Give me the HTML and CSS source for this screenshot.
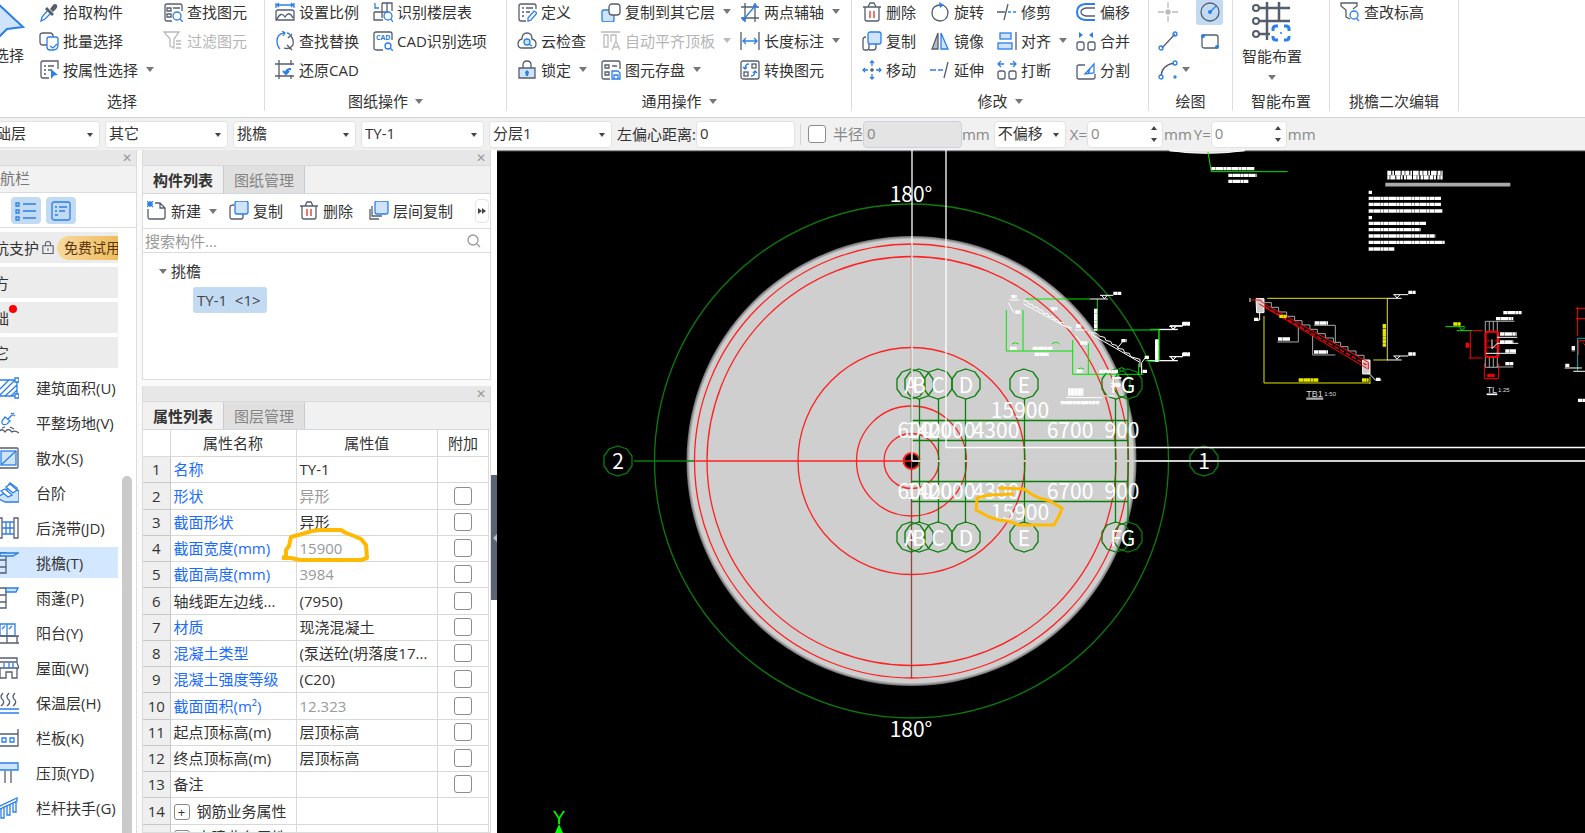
FILE: index.html
```html
<!DOCTYPE html>
<html lang="zh-CN">
<head>
    <meta charset="UTF-8">
    <meta name="viewport" content="width=device-width, initial-scale=1.0">
    <title>挑檐 TY-1</title>
    <link rel="stylesheet" href="styles.css">
</head>
<body>

    <!-- 功能区 -->
    <header class="ribbon">
        <section class="group group-select">
            <div class="tools">
                <button class="big-tool pick">
                    <svg class="arrow" viewBox="0 0 44 44"><path class="b lf" stroke-width="2" d="M14 2 L42 28 L26 30 L14 42 Z"/></svg>
                    选择
                </button>
                <button class="tool"><svg viewBox="0 0 20 20"><path class="b" d="M9 8 L3 15 L2 19 L6 17 L12 11"/><path class="df" d="M8 5 L15 12 L13 14 L6 7 Z M11 7 L14 3 Q16 1 18 3 Q19 5 17 7 L14 10 Z"/></svg>拾取构件</button>
                <button class="tool"><svg viewBox="0 0 20 20"><path d="M8 14 H4 Q1 14 1 11 V4 Q1 2 4 2 H11 Q14 2 14 5 V6"/><path class="b" d="M8 8 Q8 6 10 6 H17 Q19 6 19 8 V14 Q19 19 14 19 H11 Q8 19 8 16 Z M11 15 L14 17 L18 13"/></svg>批量选择</button>
                <button class="tool"><svg viewBox="0 0 20 20"><path d="M10 18 H4 Q2 18 2 16 V3 Q2 1 4 1 H19 V9 M5 6 H7 M9 6 H15 M5 10 H7 M9 10 H13 M5 14 H7"/><path class="bf" d="M12 9 L19 15 L15 15.500 L12 19 Z"/></svg>按属性选择<i class="caret"></i></button>
                <button class="tool"><svg viewBox="0 0 20 20"><path d="M9 19 H4 Q2 19 2 17 V4 Q2 2 4 2 H17 Q19 2 19 4 V9 M4 6 H8 V9 H4 Z M10 6 H17 M4 12 H8 V15 H4 Z"/><circle class="b" cx="14" cy="14" r="4"/><path class="b" d="M17 17 L20 20"/></svg>查找图元</button>
                <button class="tool" disabled><svg viewBox="0 0 20 20"><path d="M1 1 H16 L11 8 V17 L7 15 V8 Z M13 10 H18 M13 13 H18 M13 17 H18"/></svg>过滤图元</button>
            </div>
            <h3>选择</h3>
        </section>

        <section class="group group-drawing">
            <div class="tools">
                <button class="tool"><svg viewBox="0 0 20 20"><path class="b" d="M1 1 V6 M19 1 V6 M2 3 H18 M4 1 L2 3 L4 5 M16 1 L18 3 L16 5"/><path d="M3 8 H17 Q19 8 19 10 V18 H1 V10 Q1 8 3 8 M2 17 Q6 9 10 15 Q14 8 18 16"/></svg>设置比例</button>
                <button class="tool"><svg viewBox="0 0 20 20"><path class="b" d="M9 2 Q2 3 2 10 Q2 15 5 18 M7 0 L10 2 L8 5 M12 2 Q14 2 15 4"/><path d="M16 5 Q19 9 18 14 L14 18 M12 14 L17 19 M13 7 L17 3 M9 17 Q12 18 14 17"/></svg>查找替换</button>
                <button class="tool"><svg viewBox="0 0 20 20"><path d="M4 0 V19 M16 0 V5 M0 4 H19 M0 16 H19 M16 15 V19"/><path class="b" stroke-width="2" d="M11 13 Q11 9 16 9 M8 11 L11 14 L14 11"/></svg>还原CAD</button>
                <button class="tool"><svg viewBox="0 0 20 20"><path class="b" d="M2 1 V6 H6"/><path d="M9 1 H19 V9 M9 1 V16 M1 10 H15 M1 10 V18 H10 M14 1 V9"/><circle class="b" cx="15" cy="14" r="4"/><path class="b" d="M18 17 L20 20"/></svg>识别楼层表</button>
                <button class="tool"><svg viewBox="0 0 20 20"><path d="M10 19 H4 Q1 19 1 17 V3 Q1 1 3 1 H17 Q19 1 19 3 V9"/><text class="cad" x="3" y="9">CAD</text><circle class="b" cx="15" cy="15" r="3"/><path class="b" d="M17 17 L20 20"/></svg>CAD识别选项</button>
            </div>
            <h3>图纸操作<i class="caret"></i></h3>
        </section>

        <section class="group group-common">
            <div class="tools">
                <button class="tool"><svg viewBox="0 0 20 20"><path d="M9 19 H4 Q2 19 2 17 V4 Q2 2 4 2 H17 Q19 2 19 4 V7 M5 6 H7 M9 6 H16 M5 10 H7 M9 10 H13 M5 14 H7"/><path class="b" d="M11 19 V16 L17 9 L20 11 L14 18 Z"/></svg>定义</button>
                <button class="tool"><svg viewBox="0 0 20 20"><path d="M5 17 Q1 17 1 13 Q1 9 5 8 Q5 2 10 2 Q15 2 15 8 Q19 9 19 13 Q19 17 15 17 Z"/><circle class="b lf" cx="10" cy="11" r="3"/><path class="b" d="M12 13 L15 15"/></svg>云检查</button>
                <button class="tool"><svg viewBox="0 0 20 20"><path d="M6 8 V5 Q6 1 10 1 Q14 1 14 5 V8"/><path class="lf" d="M2 8 H18 V18 H2 Z"/><path class="bf" d="M10 10 L12 12 L11 16 H9 L8 12 Z"/></svg>锁定<i class="caret"></i></button>
                <button class="tool"><svg viewBox="0 0 20 20"><rect class="b lf" x="1" y="8" width="12" height="12" rx="2"/><rect class="wf" x="8" y="2" width="11" height="11" rx="3"/></svg>复制到其它层<i class="caret"></i></button>
                <button class="tool" disabled><svg viewBox="0 0 20 20"><path d="M0 1 H19 M3 4 H7 V16 H3 Z M10 11 V4 H15 V10 M11 19 L15 10 L19 19 M12 16 H17"/></svg>自动平齐顶板<i class="caret"></i></button>
                <button class="tool"><svg viewBox="0 0 20 20"><path d="M9 19 H3 Q1 19 1 17 V3 Q1 1 3 1 H17 Q19 1 19 3 V9 M4 5 H8 V8 H4 Z M11 6 H16 M4 12 H8 V15 H4 Z"/><path class="b" d="M11 11 H17 L19 13 V19 H11 Z M13 19 V15 H17 V19"/></svg>图元存盘<i class="caret"></i></button>
                <button class="tool"><svg viewBox="0 0 20 20"><path d="M5 1 V20 M15 1 V20 M1 5 H19 M1 16 H19"/><path class="b" d="M4 17 L15 4"/><circle class="bf" cx="4" cy="17" r="2"/><circle class="bf" cx="15" cy="4" r="2"/></svg>两点辅轴<i class="caret"></i></button>
                <button class="tool"><svg viewBox="0 0 20 20"><path d="M1 1 V19 M19 1 V19"/><path class="b" d="M3 10 H17 M6 7 L3 10 L6 13 M14 7 L17 10 L14 13"/></svg>长度标注<i class="caret"></i></button>
                <button class="tool"><svg viewBox="0 0 20 20"><rect x="1" y="1" width="18" height="18" rx="2"/><rect x="12" y="4" width="4" height="4"/><rect x="4" y="12" width="4" height="4"/><path class="b" d="M9 4 Q5 4 5 9 M3 7 L5 9 L7 7 M11 16 Q15 16 15 11 M13 13 L15 11 L17 13"/></svg>转换图元</button>
            </div>
            <h3>通用操作<i class="caret"></i></h3>
        </section>

        <section class="group group-modify">
            <div class="tools">
                <button class="tool"><svg viewBox="0 0 20 20"><path d="M1 5 H19 M6 5 L8 1 H12 L14 5 M3 5 V17 Q3 19 5 19 H15 Q17 19 17 17 V5"/><path class="r" d="M8 9 V16 M12 9 V16"/></svg>删除</button>
                <button class="tool"><svg viewBox="0 0 20 20"><path d="M7 13 V17 Q7 19 5 19 H3 Q1 19 1 17 V9 Q1 6 4 6"/><path d="M7 19 H11 Q14 19 14 16 V13"/><rect class="b lf" x="6" y="1" width="13" height="12" rx="2"/></svg>复制</button>
                <button class="tool"><svg viewBox="0 0 20 20"><path class="b" d="M10 1 V6 M10 14 V19 M1 10 H6 M14 10 H19 M8 3 L10 1 L12 3 M8 17 L10 19 L12 17 M3 8 L1 10 L3 12 M17 8 L19 10 L17 12"/><path d="M8 10 H12 M10 8 V12"/></svg>移动</button>
                <button class="tool"><svg viewBox="0 0 20 20"><path d="M13 3 Q18 6 18 11 Q17 19 10 19 Q2 18 2 11 Q2 3 11 3"/><path class="bf" d="M9 0 L14 3 L10 6 Z"/></svg>旋转</button>
                <button class="tool"><svg viewBox="0 0 20 20"><path class="gf" d="M8 2 V18 H2 Z"/><path class="b lf" d="M11 2 L18 18 H11 Z"/></svg>镜像</button>
                <button class="tool"><svg viewBox="0 0 20 20"><path class="b" d="M0 10 H6 M8 10 H13"/><path d="M18 2 L14 18"/></svg>延伸</button>
                <button class="tool"><svg viewBox="0 0 20 20"><path d="M0 10 H8 M11 2 L7 18"/><path class="b" d="M11 10 H14 M16 10 H19"/></svg>修剪</button>
                <button class="tool"><svg viewBox="0 0 20 20"><rect class="b lf" x="3" y="2" width="11" height="6"/><rect class="b lf" x="1" y="12" width="14" height="6"/><path d="M19 1 V19"/></svg>对齐<i class="caret"></i></button>
                <button class="tool"><svg viewBox="0 0 20 20"><path class="b" d="M2 4 H7 M13 4 H18 M4 1 L1 4 L4 7 M16 1 L19 4 L16 7"/><rect x="1" y="11" width="7" height="8" rx="2"/><rect x="12" y="11" width="7" height="8" rx="2"/></svg>打断</button>
                <button class="tool"><svg viewBox="0 0 20 20"><path class="b" stroke-width="2" d="M19 2 H9 Q1 3 1 10 Q1 17 9 18 H19"/><path d="M19 6 H10 Q5 7 5 10 Q5 13 10 14 H19"/></svg>偏移</button>
                <button class="tool"><svg viewBox="0 0 20 20"><path class="bf" d="M3 1 L7 4 L3 7 Z M17 1 L13 4 L17 7 Z"/><rect x="1" y="11" width="7" height="8" rx="2"/><rect x="12" y="11" width="7" height="8" rx="2"/></svg>合并</button>
                <button class="tool"><svg viewBox="0 0 20 20"><path d="M9 5 H3 Q1 5 1 7 V17 Q1 19 3 19 H17 Q19 19 19 17 V14"/><path class="b" d="M9 14 L18 4 V13 Z M12 14 L14 9"/></svg>分割</button>
            </div>
            <h3>修改<i class="caret"></i></h3>
        </section>

        <section class="group group-draw">
            <div class="tools">
                <button class="tool" aria-label="点" disabled><svg viewBox="0 0 20 20"><path d="M10 0 V6 M10 14 V20 M0 10 H6 M14 10 H20"/><circle cx="10" cy="10" r="2" fill="#bbb"/></svg></button>
                <button class="tool" aria-label="直线"><svg viewBox="0 0 20 20"><path d="M4 17 L17 3"/><circle class="b" cx="3" cy="17" r="2"/><circle class="b" cx="17" cy="3" r="2"/></svg></button>
                <button class="tool" aria-label="弧线"><svg viewBox="0 0 20 20"><path d="M3 16 Q4 5 16 3"/><circle class="b" cx="3" cy="17" r="2"/><circle class="b" cx="17" cy="3" r="2"/><circle class="b" cx="17" cy="17" r="1"/></svg><i class="caret"></i></button>
                <button class="tool active" aria-label="圆"><svg viewBox="0 0 20 20"><circle cx="10" cy="10" r="9"/><path class="b" d="M10 10 L16 4"/><circle class="bf" cx="10" cy="10" r="2"/></svg></button>
                <button class="tool" aria-label="矩形"><svg viewBox="0 0 20 20"><rect x="2" y="4" width="16" height="13" rx="2"/><circle class="bf" cx="3" cy="5" r="2"/><circle class="bf" cx="17" cy="16" r="2"/></svg></button>
            </div>
            <h3>绘图</h3>
        </section>

        <section class="group group-smart">
            <div class="tools">
                <button class="big-tool">
                    <svg class="grid-icon" viewBox="0 0 40 40"><path stroke-width="2.500" d="M6 7 H38 M6 20 H38 M6 33 H18 M15 1 V39 M27 1 V20"/><circle class="wf" stroke-width="2" cx="4" cy="7" r="3"/><circle class="wf" stroke-width="2" cx="4" cy="20" r="3"/><circle class="wf" stroke-width="2" cx="4" cy="33" r="3"/><path class="b" stroke-width="3" d="M21 30 V28 Q21 25 24 25 H26 M32 25 H34 Q37 25 37 28 V30 M37 35 V36 Q37 39 34 39 H32 M26 39 H24 Q21 39 21 36 V35"/><circle class="bf" cx="29" cy="32" r="1"/></svg>
                    智能布置
                    <i class="caret"></i>
                </button>
            </div>
            <h3>智能布置</h3>
        </section>

        <section class="group group-edit">
            <div class="tools">
                <button class="tool"><svg viewBox="0 0 20 20"><path d="M10 17 L6 15 V8 L1 4 V1 H17 V4 L13 7"/><circle class="b" cx="14" cy="13" r="4"/><path class="b" d="M16 16 L19 19"/></svg>查改标高</button>
            </div>
            <h3>挑檐二次编辑</h3>
        </section>
    </header>

    <!-- 参数栏 -->
    <form class="options">
        <span class="select"><select aria-label="楼层"><option>基础层</option></select></span>
        <span class="select"><select aria-label="构件类别"><option>其它</option></select></span>
        <span class="select"><select aria-label="构件类型"><option>挑檐</option></select></span>
        <span class="select"><select aria-label="构件"><option>TY-1</option></select></span>
        <span class="select"><select aria-label="分层"><option>分层1</option></select></span>
        <span class="field"><label for="leftOffset">左偏心距离:</label><input type="text" id="leftOffset" value="0"></span>
        <span class="rule"></span>
        <input type="checkbox" id="useRadius">
        <span class="field muted"><label for="useRadius">半径</label><input type="text" id="radius" aria-label="半径" value="0" disabled>mm</span>
        <span class="select short"><select aria-label="偏移方式"><option>不偏移</option></select></span>
        <span class="field muted spin"><label for="offsetX">X=</label><input type="text" id="offsetX" value="0"><i class="arrows"></i>mm</span>
        <span class="field muted spin"><label for="offsetY">Y=</label><input type="text" id="offsetY" value="0"><i class="arrows"></i>mm</span>
    </form>

    <main class="workspace">
        <!-- 导航栏 -->
        <nav class="nav">
            <div class="strip"><button aria-label="关闭导航栏">✕</button></div>
            <h2>导航栏</h2>
            <div class="views">
                <button aria-label="列表"><svg viewBox="0 0 22 20"><path class="b" d="M8 3 H21 M8 10 H21 M8 17 H21 M1 2 H4 V5 H1 Z M1 9 H4 V12 H1 Z M1 16 H4 V19 H1 Z"/></svg></button>
                <button aria-label="卡片"><svg viewBox="0 0 22 20"><rect class="b" x="2" y="1" width="18" height="18" rx="2"/><path class="b" d="M5 6 H7 M9 6 H17 M5 10 H7 M9 10 H15 M5 14 H8"/></svg></button>
            </div>
            <div class="nav-body">
                <ul>
                    <li class="cat"><a href="#">基坑支护</a><svg viewBox="0 0 14 16"><path d="M4 6 V4 Q4 1 7 1 Q10 1 10 4 V6 M1 6 H13 V15 H1 Z M7 9 V12"/></svg><span class="trial">免费试用</span></li>
                    <li class="cat"><a href="#">土方</a></li>
                    <li class="cat"><a href="#">基础</a><i class="dot"></i></li>
                    <li class="cat"><a href="#">其它</a></li>
                    <li><a href="#"><svg viewBox="0 0 22 22"><path class="b" d="M2 3 H20 V19 H2 Z M3 12 L12 3 M3 18 L18 3 M8 19 L20 8 M14 19 L20 13"/><path class="b wf" d="M18 1 H22 V5 H18 Z M18 17 H22 V21 H18 Z"/></svg>建筑面积(U)</a></li>
                    <li><a href="#"><svg viewBox="0 0 22 22"><path class="b" d="M5 9 Q4 14 10 12 L13 9 L8 5 Z M11 7 L17 1 M14 1 L18 4"/><path d="M1 21 Q5 15 8 20 Q11 15 15 20 Q18 18 22 21 M5 16 L8 15 M13 15 L17 17"/></svg>平整场地(V)</a></li>
                    <li><a href="#"><svg viewBox="0 0 22 22"><rect x="1" y="1" width="20" height="20" rx="1"/><rect class="b lf" x="4" y="4" width="15" height="14"/><path class="b" d="M4 18 L19 4"/></svg>散水(S)</a></li>
                    <li><a href="#"><svg viewBox="0 0 22 22"><path class="b lf" d="M2 14 L6 12 V9 L10 8 V5 L13 1 L20 6 V8 L22 9 V20 H8 L2 17 Z"/><path class="b wf" d="M4 9 L11 15 L15 13 L8 7 Z M9 5 L16 11 L20 8 L13 2 Z"/></svg>台阶</a></li>
                    <li><a href="#"><svg viewBox="0 0 22 22"><path d="M1 1 H5 V21 H1 Z M17 1 H21 V21 H17 Z"/><path class="b" d="M5 5 H17 M5 11 H17 M5 17 H17 M9 5 V17 M13 5 V17"/></svg>后浇带(JD)</a></li>
                    <li class="on"><a href="#"><svg viewBox="0 0 22 22"><path d="M3 1 H9 V21 H3 M3 8 H9 M3 15 H9"/><path class="b lf" d="M3 1 H21 L16 4 H3 Z"/></svg>挑檐(T)</a></li>
                    <li><a href="#"><svg viewBox="0 0 22 22"><path d="M3 1 H9 V21 H3 M3 8 H9 M3 15 H9"/><path class="b lf" d="M9 1 H21 L19 5 H9 Z"/></svg>雨蓬(P)</a></li>
                    <li><a href="#"><svg viewBox="0 0 22 22"><path class="b" d="M3 2 H18 V14 H3 Z M10 2 V14 M12 7 L15 4 M5 7 L8 4"/><path d="M1 14 H22 M1 21 H22 M10 14 V21 M20 14 V21"/></svg>阳台(Y)</a></li>
                    <li><a href="#"><svg viewBox="0 0 22 22"><path d="M2 1 H20 V5 H2 Z M1 11 H22 L20 6 M3 11 V21 H9 V15 H15 V21 H20 V11"/><path class="b" d="M7 6 V11 M12 6 V11 M16 6 V11"/></svg>屋面(W)</a></li>
                    <li><a href="#"><svg viewBox="0 0 22 22"><path d="M6 1 Q2 5 6 8 Q8 11 4 14 M12 1 Q8 5 12 8 Q14 11 10 14 M18 1 Q14 5 18 8 Q20 11 16 14"/><path class="b" d="M1 17 H22 M1 21 H22"/></svg>保温层(H)</a></li>
                    <li><a href="#"><svg viewBox="0 0 22 22"><path d="M1 7 H21 V2 M21 7 V19 H1"/><path class="b" d="M5 11 H9 V15 H5 Z M13 11 H17 V15 H13 Z"/></svg>栏板(K)</a></li>
                    <li><a href="#"><svg viewBox="0 0 22 22"><path class="b lf" d="M1 1 H21 V8 H1 Z"/><path d="M8 9 V21 M14 9 V21"/></svg>压顶(YD)</a></li>
                    <li><a href="#"><svg viewBox="0 0 22 22"><path class="b" d="M1 10 L20 1 V4 L1 13 Z M4 11 V21 H7 V10 M10 9 V18 H13 V8 M16 6 V15 H19 V4"/></svg>栏杆扶手(G)</a></li>
                    <li><a href="#" aria-label="更多"><svg viewBox="0 0 22 22"><path d="M5 2 V8 M11 1 V8 M17 2 V8"/></svg></a></li>
                </ul>
                <div class="scroll"><i></i></div>
            </div>
        </nav>

        <div class="docks">
            <!-- 构件列表 -->
            <section class="dock parts">
                <div class="strip"><button aria-label="关闭构件列表">✕</button></div>
                <div class="tabs"><button class="current">构件列表</button><button>图纸管理</button></div>
                <div class="dock-tools">
                    <button class="tool"><svg viewBox="0 0 20 20"><path d="M8 2 H13 L18 7 V16 Q18 18 16 18 H3 Q1 18 1 16 V8 M13 2 V7 H18"/><path class="b" d="M0 0 L6 6 M6 0 L0 6 M3 0 V6 M0 3 H6"/></svg>新建<i class="caret"></i></button>
                    <button class="tool"><svg viewBox="0 0 20 20"><path d="M14 13 V16 Q14 18 12 18 H3 Q1 18 1 16 V6 Q1 4 5 4"/><rect class="b lf" x="6" y="0" width="13" height="13" rx="2"/></svg>复制</button>
                    <button class="tool"><svg viewBox="0 0 20 20"><path d="M1 5 H19 M6 5 L8 1 H12 L14 5 M3 5 V16 Q3 18 5 18 H15 Q17 18 17 16 V5"/><path class="r" d="M8 8 V15 M12 8 V15"/></svg>删除</button>
                    <button class="tool"><svg viewBox="0 0 20 20"><path d="M1 8 V18 H10 M3 5 V15 H13"/><rect class="b lf" x="6" y="0" width="13" height="13" rx="2"/></svg>层间复制</button>
                    <button class="more" aria-label="更多"><i></i><i></i></button>
                </div>
                <div class="search">
                    <input type="text" aria-label="搜索构件" placeholder="搜索构件...">
                    <svg viewBox="0 0 14 14"><circle cx="6" cy="6" r="5"/><path d="M10 10 L13 13"/></svg>
                </div>
                <div class="tree">
                    <div class="node"><i class="caret"></i>挑檐</div>
                    <button class="leaf">TY-1&nbsp; &lt;1&gt;</button>
                </div>
            </section>

            <!-- 属性列表 -->
            <section class="dock props">
                <div class="strip"><button aria-label="关闭属性列表">✕</button></div>
                <div class="tabs"><button class="current">属性列表</button><button>图层管理</button></div>
                <table>
                    <thead>
                        <tr><th class="num"></th><th class="name">属性名称</th><th>属性值</th><th class="add">附加</th></tr>
                    </thead>
                    <tbody>
                        <tr><th>1</th><td class="key">名称</td><td>TY-1</td><td></td></tr>
                        <tr><th>2</th><td class="key">形状</td><td class="off">异形</td><td><input type="checkbox" aria-label="附加 形状"></td></tr>
                        <tr><th>3</th><td class="key">截面形状</td><td>异形</td><td><input type="checkbox" aria-label="附加 截面形状"></td></tr>
                        <tr><th>4</th><td class="key">截面宽度(mm)</td><td class="off">15900</td><td><input type="checkbox" aria-label="附加 截面宽度"></td></tr>
                        <tr><th>5</th><td class="key">截面高度(mm)</td><td class="off">3984</td><td><input type="checkbox" aria-label="附加 截面高度"></td></tr>
                        <tr><th>6</th><td>轴线距左边线...</td><td>(7950)</td><td><input type="checkbox" aria-label="附加 轴线距左边线"></td></tr>
                        <tr><th>7</th><td class="key">材质</td><td>现浇混凝土</td><td><input type="checkbox" aria-label="附加 材质"></td></tr>
                        <tr><th>8</th><td class="key">混凝土类型</td><td>(泵送砼(坍落度17...</td><td><input type="checkbox" aria-label="附加 混凝土类型"></td></tr>
                        <tr><th>9</th><td class="key">混凝土强度等级</td><td>(C20)</td><td><input type="checkbox" aria-label="附加 混凝土强度等级"></td></tr>
                        <tr><th>10</th><td class="key">截面面积(m²)</td><td class="off">12.323</td><td><input type="checkbox" aria-label="附加 截面面积"></td></tr>
                        <tr><th>11</th><td>起点顶标高(m)</td><td>层顶标高</td><td><input type="checkbox" aria-label="附加 起点顶标高"></td></tr>
                        <tr><th>12</th><td>终点顶标高(m)</td><td>层顶标高</td><td><input type="checkbox" aria-label="附加 终点顶标高"></td></tr>
                        <tr><th>13</th><td>备注</td><td></td><td><input type="checkbox" aria-label="附加 备注"></td></tr>
                        <tr><th>14</th><td><button class="expand">+</button>钢筋业务属性</td><td></td><td></td></tr>
                        <tr><th>20</th><td><button class="expand">+</button>土建业务属性</td><td></td><td></td></tr>
                    </tbody>
                </table>
                <svg class="mark" viewBox="0 0 90 34"><path d="M2 29 L6 30 L6 22 L9 18 L11 9 L22 6 L32 3 L40 2 L61 2 L66 5 L74 8 L81 11 L86 17 L87 30 L81 32 L20 32 L11 30 L2 30"/></svg>
            </section>
        </div>

        <button class="splitter" aria-label="收起面板"></button>

        <!-- 绘图区 -->
        <svg class="canvas" viewBox="497 150 1088 683" preserveAspectRatio="xMinYMin slice">
            <defs>
                <radialGradient id="slab">
                    <stop offset="0" stop-color="#cfcfcf"/>
                    <stop offset="0.985" stop-color="#cfcfcf"/>
                    <stop offset="1" stop-color="#666"/>
                </radialGradient>
                <path id="bubble" d="M0 -15 L9 -12 L14 -5 L14 5 L9 12 L0 15 L-9 12 L-14 5 L-14 -5 L-9 -12 Z"/>
            </defs>
            <path class="edge" d="M497 150.500 H1585"/>
            <circle cx="911.500" cy="461" r="225" fill="url(#slab)"/>
            <g class="red">
                <circle cx="911.500" cy="461" r="217"/>
                <circle cx="911.500" cy="461" r="204.500"/>
                <circle cx="911.500" cy="461" r="113.500"/>
                <circle cx="911.500" cy="461" r="55"/>
                <circle cx="911.500" cy="461" r="27.500"/>
                <circle cx="911.500" cy="461" r="8" fill="#000" stroke-width="2"/>
                <path d="M694 461 H911"/>
                <path class="maroon" d="M911.500 244 V678"/>
            </g>
            <g class="green">
                <circle cx="911.500" cy="461" r="257"/>
                <path d="M634 461 H694 M911.500 420.500 H1128 M911.500 440.500 H1128 M911.500 481.500 H1128 M911.500 501.500 H1128"/>
                <path d="M911.500 399 V440 M919.500 399 V523 M938.500 399 V523 M965.500 399 V523 M1024.500 399 V523 M1115.500 399 V523 M1128 399 V523"/>
                <use href="#bubble" x="911" y="384"/><use href="#bubble" x="919" y="384"/><use href="#bubble" x="938" y="384"/><use href="#bubble" x="966" y="384"/><use href="#bubble" x="1024" y="384"/><use href="#bubble" x="1116" y="384"/><use href="#bubble" x="1128" y="384"/>
                <use href="#bubble" x="911" y="537"/><use href="#bubble" x="919" y="537"/><use href="#bubble" x="938" y="537"/><use href="#bubble" x="966" y="537"/><use href="#bubble" x="1024" y="537"/><use href="#bubble" x="1116" y="537"/><use href="#bubble" x="1128" y="537"/>
                <use href="#bubble" x="618" y="461"/><use href="#bubble" x="1204" y="461"/>
            </g>
            <g class="white">
                <path d="M912 150 V461 M946 150 V447.500 H1585"/>
                <path class="soft" d="M912 461 H1585"/>
            </g>
            <g class="dim">
                <text x="911" y="202">180°</text><text x="911" y="737">180°</text>
                <text x="618" y="469">2</text><text x="1204" y="469">1</text>
                <text x="911" y="393">A</text><text x="919" y="393">B</text><text x="938" y="393">C</text><text x="966" y="393">D</text><text x="1024" y="393">E</text><text x="1116" y="393">F</text><text x="1128" y="393">G</text>
                <text x="911" y="546">A</text><text x="919" y="546">B</text><text x="938" y="546">C</text><text x="966" y="546">D</text><text x="1024" y="546">E</text><text x="1116" y="546">F</text><text x="1128" y="546">G</text>
                <text x="1020" y="418">15900</text><text x="1020" y="520">15900</text>
                <text x="915" y="438">600</text><text x="929" y="438">1400</text><text x="952" y="438">2000</text><text x="996" y="438">4300</text><text x="1070" y="438">6700</text><text x="1122" y="438">900</text>
                <text x="915" y="499">600</text><text x="929" y="499">1400</text><text x="952" y="499">2000</text><text x="996" y="499">4300</text><text x="1070" y="499">6700</text><text x="1122" y="499">900</text>
            </g>

            <!-- 楼梯大样 -->
            <g class="detail" transform="translate(980 270) scale(0.3333)">
                <path class="lime" d="M138 87 H330 M352 87 V182 M340 180 H537 V272 H497 M79 120 V243 H280 M129 120 V243 M278 210 V313 H490 M325 220 V313 M476 280 V313 M485 290 V313 M96 222 Q106 214 116 222 M216 222 Q228 212 238 222 M292 298 Q302 290 312 298 M416 297 Q426 289 434 297"/>
                <path d="M330 87 H384 M360 76 H400 M365 76 L373 86 L382 76 M537 179 H592 M567 169 H608 M572 169 L580 179 L588 169 M505 272 H592 M567 260 H608 M572 260 L580 270 L588 260"/>
                <path d="M130 101 L275 180 M333 192 L478 276"/>
                <path d="M130 92 L142 94 L145 102 L157 103 L160 111 L173 112 L176 120 L188 121 L191 130 L203 131 L206 139 L219 140 L222 148 L234 149 L237 157 L250 158 L253 166 L275 174 M325 186 L350 190 L360 199 L374 202 L378 212 L392 214 L396 223 L410 226 L414 235 L430 238 L434 248 L448 250 L452 260 L480 268 M480 268 V292 M497 262 L485 278 V310 M88 90 H118 M85 98 L102 128 M285 180 H320 M288 198 L308 222 M412 235 L430 212 M215 115 L222 125"/>
                <path class="note" d="M94 80 H110 M106 126 H122 M212 116 H232 M400 70 H424 M606 162 H630 M606 254 H630 M90 235 H110 M158 235 H218 M164 253 H206 M288 168 H304 M300 219 H322 M424 212 H440 M290 303 H308 M358 304 H414 M494 262 H508 M488 304 H502 M242 398 H358"/>
                <path class="note" d="M347 116 V182 M531 208 V276"/>
                <path stroke-width="22" stroke-dasharray="7 1 11 1" d="M264 366 H310"/>
                <path d="M258 383 H366 M372 378 H404 M392 340 H420 V350 H392"/>
            </g>

            <!-- 右侧图纸 -->
            <g class="detail" transform="translate(1150 150) scale(0.3333)">
                <path fill="#ddd" d="M58 2 Q170 18 284 2 Z"/>
                <path class="lime" d="M174 6 L184 65 H413"/>
                <path class="note" d="M184 56 H314 M235 76 H320 M235 94 H296"/>
                <path class="title" d="M712 69 H878"/>
                <path class="title low" d="M712 82 H878"/>
                <path stroke="#aaa" stroke-width="11" d="M706 104 H1081"/>
                <path class="note" d="M656 127 H666 M656 145 H873 M656 163 H873 M656 183 H878 M656 203 H666 M656 220 H828 M656 239 H812 M656 258 H856 M656 277 H884 M656 297 H733"/>

                <path class="yellow" d="M352 445 H712 V631 M670 630 H714 M342 498 V699 H660 M660 680 V702"/>
                <path fill="#ccc" d="M318 446 H342 V488 H320 Z M638 630 H660 V672 H638 Z"/>
                <path class="gray" d="M343 458 H364 V472 H386 V486 H410 V499 H434 V512 H456 V525 H480 V538 H502 V551 H526 V564 H550 V577 H572 V590 H594 V603 H618 V616 H642 V630 M445 530 V576 H382 M492 526 H556 V577 M488 557 V615 H556"/>
                <path class="scarlet" d="M304 450 H330 L345 463 L655 637 V658 M328 462 L652 656"/>
                <path class="scarlet" stroke-width="4" stroke-dasharray="14 6" d="M345 470 L650 645"/>
                <path d="M300 444 V456 M329 488 V510 L314 512 M655 668 L676 690 H694 M712 445 H755 M730 434 H775 M733 434 L741 444 L750 434 M712 630 H755 M730 618 H775 M733 618 L741 628 L750 618"/>
                <path class="note" d="M312 508 H326 M775 427 H797 M775 612 H797 M98 520 H120 M98 612 H120 M384 567 H420 M494 519 H534 M492 606 H534 M678 688 H692"/>
                <path class="note yellow" d="M446 690 H505 M636 690 H656 M388 499 H410"/>
                <path class="note yellow" d="M703 522 V590"/>
                <path d="M27 538 H84 M60 527 H98 M62 528 L69 538 L78 528 M22 632 H84 M60 620 H98 M62 620 L69 630 L78 620"/>
                <path class="lime" d="M0 538 H27 V634 H0"/>
                <path class="note" d="M20 570 V636"/>
                <text x="469" y="740">TB1</text><text class="small" x="523" y="739">1:50</text>
                <path class="gray" stroke-width="7" d="M469 746 H520"/>

                <path class="lime" d="M886 530 H944 M920 542 H968 M928 532 L936 541 L946 532"/>
                <path class="note yellow" d="M910 522 H932"/>
                <path class="scarlet" d="M968 542 H998 M961 542 V625 M956 624 H998 M1003 640 V686 H1046 V640"/>
                <path class="note scarlet" d="M952 578 V594 M1012 676 H1034"/>
                <path class="gray" d="M1006 514 H1042 V652 H1006 Z M1018 514 V545 M1030 514 V545 M1018 622 V652 M1030 622 V652 M1042 514 H1094 M1040 651 H1090"/>
                <rect class="scarlet" stroke-width="6" x="1007" y="545" width="38" height="76" rx="6"/>
                <path class="scarlet" d="M1010 573 H1020 M1034 573 H1044 M1010 592 H1044"/>
                <path d="M1026 568 V596 L1042 580 H1105 M1042 562 H1102 M1008 610 H1098"/>
                <path class="note" d="M1060 488 H1115 M1038 506 H1090 M1050 552 H1100 M1050 576 H1090 M1066 603 H1098 M1066 641 H1090"/>
                <text x="1010" y="728">TL</text><text class="small" x="1044" y="727">1:25</text>
                <path d="M1010 733 H1042" stroke-width="5"/>

                <path class="scarlet" d="M1283 470 V558 M1278 475 H1305 M1278 506 H1305 M1285 572 V615 M1285 572 H1305 M1300 580 L1305 585"/>
                <path class="cyan" d="M1283 664 V565 H1305"/>
                <path d="M1244 654 H1296 M1270 664 H1305"/>
                <path class="note" d="M1246 646 H1258 M1284 751 H1305"/>
                <path class="note" d="M1270 588 V604"/>
            </g>
            <path class="ink" d="M998 488 L1024 489 L1031 494 L1039 498 L1050 501 L1062 508 L1060 514 L1054 525 L1019 525 L1008 521 L999 520 L989 517 L976 510 L977 498 L989 495 L1014 494"/>
            <text class="axis" x="559" y="824">Y</text>
            <path fill="#0f0" d="M559 824 L563 833 H555 Z"/>
        </svg>
    </main>

</body>
</html>
```
FILE: styles.css
```css
* {
    box-sizing: border-box;
}
body {
    margin: 0;
    height: 100vh;
    display: flex;
    flex-direction: column;
    overflow: hidden;
    background-color: #fff;
    color: #333;
    font-family: "Open Sans", "Noto Sans CJK SC", sans-serif;
    font-size: 15px;
    line-height: 20px;
}
button, input, select {
    font: inherit;
    color: inherit;
    margin: 0;
}
button {
    padding: 0;
    border: none;
    background: none;
    white-space: nowrap;
    cursor: pointer;
}
h2, h3, ul {
    margin: 0;
    padding: 0;
    font-size: 15px;
    font-weight: normal;
    list-style: none;
}
a {
    color: inherit;
    text-decoration: none;
}
input[type=checkbox] {
    appearance: none;
    width: 18px;
    height: 18px;
    border: 1px solid #8c8c8c;
    border-radius: 3px;
    background-color: #fff;
}

/* 图标 */
svg {
    flex: none;
    fill: none;
    stroke: #555d6e;
    stroke-width: 1.3;
}
.b { stroke: #2b7fe8; }
.r { stroke: #e02c2c; }
.lf { fill: #cfe3fb; }
.wf { fill: #fff; }
.bf { fill: #2b7fe8; stroke: none; }
.df { fill: #555d6e; stroke: none; }
.gf { fill: #b8bcc4; }
.cad {
    fill: #2b7fe8;
    stroke: none;
    font-size: 7px;
    font-weight: bold;
}
.caret {
    border: 4px solid transparent;
    border-top: 5px solid #777;
    border-bottom: none;
}

/* 功能区 */
.ribbon {
    display: flex;
    margin-left: -20px;
    padding-bottom: 6px;
    border-bottom: 1px solid #d4d4d4;
}
.group {
    border-right: 1px solid #dcdcdc;
    height: 111px;
}
.tools {
    display: grid;
    grid-auto-flow: column;
    grid-template-rows: repeat(3, 29px);
    margin-top: -3px;
}
.tool {
    display: flex;
    align-items: center;
    gap: 4px;
}
.tool svg {
    width: 20px;
    height: 20px;
}
.tool .caret {
    margin-left: 4px;
}
.tool:disabled {
    color: #b5b5b5;
}
.tool:disabled svg {
    stroke: #bbb;
}
.tool:disabled .caret {
    border-top-color: #bbb;
}
.group h3 {
    display: flex;
    justify-content: center;
    align-items: center;
    gap: 7px;
    height: 34px;
}
.big-tool {
    grid-row: span 3;
    display: flex;
    flex-direction: column;
    align-items: center;
}
.pick {
    width: 58px;
    padding-top: 2px;
}
.pick .arrow {
    width: 44px;
    height: 44px;
    margin-bottom: 2px;
    margin-left: -12px;
}
.grid-icon {
    width: 40px;
    height: 42px;
    margin: 3px 0 4px;
}
.big-tool .caret {
    margin-top: 9px;
}
.group-select { width: 285px; }
.group-select .tools { grid-template-columns: 59px 124px auto; }
.group-drawing { width: 242px; }
.group-drawing .tools { padding-left: 10px; grid-template-columns: 98px auto; }
.group-common { width: 345px; }
.group-common .tools { padding-left: 10px; grid-template-columns: 84px 139px auto; }
.group-modify { width: 297px; }
.group-modify .tools { padding-left: 10px; grid-template-columns: 68px 67px 79px auto; }
.group-draw { width: 84px; }
.group-draw .tools { padding-left: 9px; grid-template-columns: 38px 27px; }
.group-draw .active {
    height: 26px;
    align-self: center;
    background-color: #c3daf3;
    border-radius: 3px;
    justify-content: center;
}
.group-draw .tool:nth-child(5) { justify-content: center; }
.group-draw .caret { margin-left: 0; }
.group-smart { width: 97px; }
.group-smart .tools { padding-right: 18px; }
.group-edit { width: 129px; }
.group-edit .tools { padding-left: 10px; }

/* 参数栏 */
.options {
    display: flex;
    align-items: center;
    gap: 2px;
    height: 32px;
    margin-left: -23px;
    background-color: #f1f1f1;
}
.options > * {
    flex: none;
}
.select {
    position: relative;
    width: 123px;
    margin-right: 3px;
}
.select select, .field input {
    appearance: none;
    width: 100%;
    height: 27px;
    padding: 0 3px 2px;
    border: 1px solid #e2e2e2;
    border-radius: 4px;
    background-color: #fff;
    display: block;
}
.select::after {
    content: "";
    position: absolute;
    right: 7px;
    top: 12px;
    border: 3px solid transparent;
    border-top: 4px solid #444;
    border-bottom: none;
}
.select.short {
    width: 72px;
    margin: 0 2px;
}
.field {
    display: flex;
    align-items: center;
    height: 27px;
}
.field input {
    width: 99px;
}
.muted {
    color: #888;
}
.field input:disabled {
    background-color: #e4e4e4;
    border-color: #ccd3dd;
}
.spin input {
    width: 76px;
}
.spin .arrows {
    width: 6px;
    height: 16px;
    margin: 0 7px 0 -12px;
    display: flex;
    flex-direction: column;
    justify-content: space-between;
}
.arrows::before, .arrows::after {
    content: "";
    border: 3px solid transparent;
}
.arrows::before { border-bottom: 4px solid #444; border-top: none; }
.arrows::after { border-top: 4px solid #444; border-bottom: none; }
.rule {
    width: 1px;
    height: 21px;
    margin: 0 3px;
    background-color: #d4d4d4;
}
.options > input {
    margin: 0 5px 0 2px;
}

.workspace {
    flex: 1;
    min-height: 0;
    display: flex;
}
.strip {
    display: flex;
    justify-content: flex-end;
    align-items: center;
    height: 16px;
    padding-right: 4px;
    background-color: #e7e7e7;
    border-bottom: 1px solid #dadada;
}
.strip button {
    font-size: 12px;
    line-height: 14px;
    color: #999;
}

/* 导航栏 */
.nav {
    flex: none;
    width: 167px;
    margin-left: -30px;
    display: flex;
    flex-direction: column;
    border-right: 1px solid #dcdcdc;
}
.nav h2 {
    height: 27px;
    padding: 2px 0 0 15px;
    background-color: #f2f2f2;
    border-bottom: 1px solid #dcdcdc;
    color: #777;
}
.views {
    display: flex;
    gap: 5px;
    height: 35px;
    padding: 4px 0 0 41px;
    border-bottom: 1px solid #dcdcdc;
}
.views button {
    width: 30px;
    height: 27px;
    border-radius: 4px;
    background-color: #c3daf3;
}
.views svg {
    width: 22px;
    height: 20px;
    display: block;
    margin: auto;
}
.nav-body {
    flex: 1;
    min-height: 0;
    display: flex;
    justify-content: space-between;
    padding: 4px 4px 0 0;
}
.nav ul {
    width: 148px;
    overflow: hidden;
}
.nav li {
    display: flex;
    align-items: center;
    height: 31px;
    margin-bottom: 4px;
    padding-left: 27px;
    white-space: nowrap;
}
.nav li a {
    display: flex;
    align-items: center;
    gap: 17px;
}
.nav li a svg {
    width: 22px;
    height: 22px;
}
.nav .cat {
    padding-left: 9px;
    background-color: #ececec;
}
.cat svg {
    width: 12px;
    height: 15px;
    margin: 0 3px;
}
.nav .on {
    background-color: #d3e7ff;
}
.trial {
    padding: 2px 0 2px 7px;
    border-radius: 12px 0 0 12px;
    background: linear-gradient(90deg, #f7d9a0, #eebc5c);
    color: #5a3208;
    font-size: 14px;
}
.dot {
    width: 8px;
    height: 8px;
    margin-bottom: 18px;
    border-radius: 50%;
    background-color: #f00;
}
.scroll {
    width: 10px;
    padding-top: 244px;
    display: flex;
}
.scroll i {
    flex: 1;
    border-radius: 5px 5px 0 0;
    background-color: #cacaca;
}

/* 停靠面板 */
.docks {
    flex: none;
    width: 354px;
    padding-left: 5px;
    display: flex;
    flex-direction: column;
    gap: 6px;
    background-color: #fafafa;
}
.dock {
    background-color: #fff;
    border: 1px solid #dcdcdc;
    border-top: none;
}
.parts {
    flex: none;
    height: 230px;
}
.tabs {
    display: flex;
    height: 28px;
    background-color: #f1f1f1;
    border-bottom: 1px solid #d4d8dc;
}
.tabs button {
    width: 81px;
    border-right: 1px solid #c6ccd2;
    background-color: #e0e0e0;
    color: #858585;
}
.tabs .current {
    background-color: #f1f1f1;
    color: #333;
    font-weight: bold;
}
.dock-tools {
    display: flex;
    align-items: center;
    gap: 16px;
    height: 35px;
    padding-left: 4px;
    border-bottom: 1px solid #dcdcdc;
}
.dock-tools .tool:first-child {
    margin-right: -4px;
}
.more {
    display: flex;
    justify-content: center;
    align-items: center;
    width: 14px;
    height: 24px;
    margin: 0 1px 0 auto;
    border: 1px solid #e4e4e4;
    border-radius: 4px;
}
.more i {
    border: 3px solid transparent;
    border-left: 4px solid #444;
    border-right: none;
}
.search {
    display: flex;
    align-items: center;
    height: 24px;
    padding-right: 9px;
    border-bottom: 1px solid #dcdcdc;
}
.search input {
    flex: 1;
    padding: 0 2px;
    border: none;
    outline: none;
}
.search input::placeholder {
    color: #999;
}
.search svg {
    width: 14px;
    height: 14px;
    stroke: #999;
}
.tree {
    padding: 8px 0 0 16px;
}
.node {
    display: flex;
    align-items: center;
    gap: 4px;
}
.leaf {
    height: 26px;
    margin: 6px 0 0 34px;
    padding: 0 6px 0 4px;
    border-radius: 3px;
    background-color: #c3daf3;
    color: #444;
}
.props {
    position: relative;
    flex: 1;
    min-height: 0;
    overflow: hidden;
}
table {
    width: 346px;
    table-layout: fixed;
    border-collapse: collapse;
}
tr {
    height: 26px;
}
tbody tr:nth-child(4n+2) {
    height: 27px;
}
th, td {
    padding: 0;
    border-right: 1px solid #d9d9d9;
    border-bottom: 1px solid #d9d9d9;
    font-weight: normal;
    text-align: center;
    white-space: nowrap;
}
td {
    padding-left: 3px;
    text-align: left;
}
td:last-child {
    padding: 0;
    text-align: center;
}
td input[type=checkbox] {
    display: block;
    margin: auto;
}
tbody th {
    background-color: #efefef;
    border-color: #c8c8c8;
}
.num { width: 27px; }
.name { width: 126px; }
.add { width: 51px; }
.key { color: #1a6bff; }
.off { color: #999; }
.expand {
    width: 16px;
    height: 16px;
    margin: 0 7px 0 0;
    border: 1px solid #888;
    border-radius: 3px;
    font-size: 13px;
    line-height: 12px;
}
/* 手绘圈注 */
.mark {
    position: absolute;
    left: 137px;
    top: 142px;
    width: 90px;
    height: 34px;
    stroke: #ffb900;
    stroke-width: 4;
    stroke-linejoin: round;
    pointer-events: none;
}
.splitter {
    flex: none;
    align-self: flex-start;
    width: 6px;
    height: 125px;
    margin-top: 325px;
    background-color: #5a6472;
    display: flex;
    align-items: center;
    justify-content: flex-end;
}
.splitter::before {
    content: "";
    border: 4px solid transparent;
    border-right: 4px solid #b9bfc8;
    border-left: none;
}

/* 绘图区 */
.canvas {
    flex: 1;
    min-width: 0;
    height: 100%;
    background-color: #000;
    stroke: none;
}
.edge { stroke: #999; }
.red { stroke: #ff2020; }
.maroon { stroke: #a03c3c; }
.green { stroke: #0a7d0a; }
.white { stroke: #fff; }
.soft { stroke: #d0d0d0; stroke-width: 2; }
.dim text {
    fill: #fff;
    font-family: "Noto Sans CJK SC", sans-serif;
    font-size: 21px;
    text-anchor: middle;
}
.detail { stroke: #fff; stroke-width: 3; }
.detail text {
    fill: #ddd;
    stroke: none;
    font-family: "Liberation Sans", sans-serif;
    font-size: 27px;
}
.detail .small { font-size: 18px; }
.lime { stroke: #00e600; }
.yellow { stroke: #e6e600; }
.gray { stroke: #aaa; }
.scarlet { stroke: #f00; }
.cyan { stroke: #00b4b4; }
.note {
    stroke-width: 10;
    stroke-dasharray: 13 1 22 1 8 1;
}
.title {
    stroke-width: 13;
    stroke-dasharray: 12 3 5 3 17 3 9 2;
}
.low {
    stroke-dasharray: 7 2 15 3 11 2 6 4;
}
.ink {
    stroke: #ffb900;
    stroke-width: 3;
    stroke-linejoin: round;
}
.axis {
    fill: #0f0;
    font-family: "Liberation Sans", sans-serif;
    font-size: 19px;
    text-anchor: middle;
}
```
